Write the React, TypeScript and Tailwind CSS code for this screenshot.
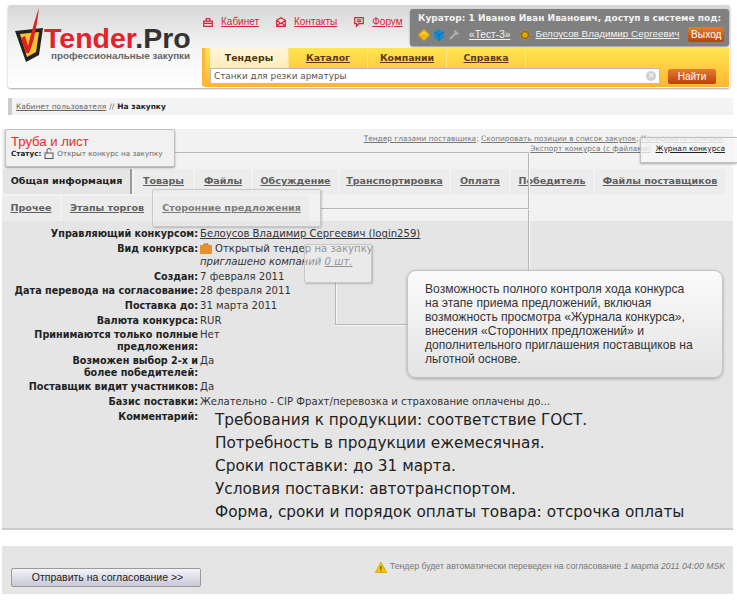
import React from "react";

const verdana = "font-['DejaVu_Sans',sans-serif]";
const arial = "font-['Liberation_Sans',sans-serif]";

const topLinks = [
  { label: "Кабинет", icon: "M2 6h10v6H2z M5 6V3h4v3 M2 8.5h10" },
  { label: "Контакты", icon: "M2 5l5-3 5 3v7H2z M2 5l5 4 5-4 M2 12l4-4 M12 12L8 8" },
  { label: "Форум", icon: "M2 2h10v7H7l-3 3V9H2z M4.5 4.5h5 M4.5 6.5h5" },
];

const mainTabs = ["Тендеры", "Каталог", "Компании", "Справка"];

const tabsRowOne = [
  { label: "Общая информация", width: "w-[129px]", active: true },
  { label: "Товары", width: "w-[59px]" },
  { label: "Файлы", width: "w-[56px]" },
  { label: "Обсуждение", width: "w-[85px]" },
  { label: "Транспортировка", width: "w-[109px]" },
  { label: "Оплата", width: "w-[58px]" },
  { label: "Победитель", width: "w-[82px]" },
  { label: "Файлы поставщиков", width: "w-[130px]" },
];

const tabsRowTwo = [
  { label: "Прочее", width: "w-[58px]" },
  { label: "Этапы торгов", width: "w-[90px]" },
  { label: "Сторонние предложения", width: "w-[155px]" },
];

const simpleRows = [
  { label: "Создан:", value: "7 февраля 2011" },
  { label: "Дата перевода на согласование:", value: "28 февраля 2011" },
  { label: "Поставка до:", value: "31 марта 2011" },
  { label: "Валюта конкурса:", value: "RUR" },
  { label: "Принимаются только полные\nпредложения:", value: "Нет" },
  { label: "Возможен выбор 2-х и\nболее победителей:", value: "Да" },
  { label: "Поставщик видит участников:", value: "Да" },
  { label: "Базис поставки:", value: "Желательно - CIP Фрахт/перевозка и страхование оплачены до..." },
];

const comments = [
  "Требования к продукции: соответствие ГОСТ.",
  "Потребность в продукции ежемесячная.",
  "Сроки поставки: до 31 марта.",
  "Условия поставки: автотранспортом.",
  "Форма, сроки и порядок оплаты товара: отсрочка оплаты",
];

function Logo() {
  return (
    <div className="relative w-[190px] h-[70px] shrink-0">
      <svg className="absolute left-[6px] top-[2px]" width="42" height="60" viewBox="0 0 42 60">
        <path d="M1 24l28-3-4 27-13 7z" fill="#222" />
        <path d="M6 27l19-2-3 20-9 5z" fill="#fbc531" />
        <path d="M7 31l4-2 3 10C17 27 21 12 25 1c-2 17-5 34-10 45h-3z" fill="#e02020" />
      </svg>
      <span className={`absolute left-[36px] top-[20px] text-[28.5px] leading-[26px] font-bold text-[#e3222a] whitespace-nowrap ${arial}`}>
        Tender<span className="text-[#333]">.Pro</span>
      </span>
      <span className={`absolute left-[43px] top-[46px] text-[9.9px] leading-[10px] font-bold text-[#666] whitespace-nowrap ${arial}`}>
        профессиональные закупки
      </span>
    </div>
  );
}

function Header() {
  return (
    <div className="mx-[8px] mt-[5px] w-[722px] h-[83px] rounded-[3px] flex bg-gradient-to-b from-[#d6d6d6] via-[#f4f4f4] to-white shadow-[0_1px_2px_rgba(0,0,0,0.35)]">
      <Logo />
      <div className="flex flex-col ml-[4px] w-[527px] pt-[4px]">
        <div className="flex h-[39px]">
          <div className="flex items-start pt-[7px] w-[208px]">
            {topLinks.map((l) => (
              <a key={l.label} className={`flex items-center ${l.label === "Форум" ? "" : "mr-[16px]"} text-[10px] leading-[12px] text-[#d8213b] underline ${arial}`}>
                <svg className="mr-[7px]" width="12" height="12" viewBox="0 0 14 14" fill="none" stroke="#d8213b" strokeWidth="1.4">
                  <path d={l.icon} />
                </svg>
                {l.label}
              </a>
            ))}
          </div>
          <div className="w-[319px] h-[37px] rounded-[3px] bg-[#808080] pl-[8px] pt-[2px] shadow-[0_1px_2px_rgba(0,0,0,0.4)] text-[#f2f2f2]">
            <div className={`text-[9.05px] leading-[15px] font-bold whitespace-nowrap ${verdana}`}>
              Куратор: 1 Иванов Иван Иванович, доступ в системе под:
            </div>
            <div className={`flex items-center h-[17px] text-[10.2px] whitespace-nowrap ${arial}`}>
              <svg className="mr-[3px]" width="12" height="12" viewBox="0 0 12 12"><path d="M6 0l6 6-6 6-6-6z" fill="#f0b400" /><path d="M3 6l3-3 3 3" fill="none" stroke="#ffe07a" /></svg>
              <svg className="mr-[4px]" width="12" height="12" viewBox="0 0 12 12"><path d="M6 0l5 3v6l-5 3-5-3V3z" fill="#1a8bd0" /><path d="M1 3l5 3 5-3M6 6v6" fill="none" stroke="#0b5f96" strokeWidth="0.7" /></svg>
              <svg className="mr-[9px]" width="11" height="11" viewBox="0 0 12 12"><path d="M1 11L8 4M6 2l4 4" stroke="#b0b0b0" strokeWidth="2.2" /></svg>
              <a className="underline mr-[9px]">«Тест-3»</a>
              <svg className="mr-[4px]" width="12" height="12" viewBox="0 0 12 12"><circle cx="6" cy="6" r="3.4" fill="#e6a800" stroke="#7a5a00" /><path d="M6 0v2M6 10v2M0 6h2M10 6h2M2 2l1.4 1.4M8.6 8.6L10 10M10 2L8.6 3.4M2 10l1.4-1.4" stroke="#c69000" /></svg>
              <a className="underline text-[9.85px]">Белоусов Владимир Сергеевич</a>
              <span className="ml-[9px] w-[36px] h-[15px] rounded-[2px] bg-gradient-to-b from-[#e87a30] to-[#b8400c] flex items-center justify-center text-white">Выход</span>
            </div>
          </div>
        </div>
        <div className="h-[39px] bg-gradient-to-b from-[#ffe650] to-[#ffb52f] rounded-bl-[3px] pl-[5px] border-l-[3px] border-[#ffb73a]">
          <div className="flex h-[20px]">
            {mainTabs.map((t, i) => (
              <div
                key={t}
                className={`flex items-center justify-center w-[79px] text-[9.4px] font-bold border-r border-[#fde68a] ${verdana} ${i === 0 ? "bg-gradient-to-b from-[#fff7dc] to-[#ffedb8] text-[#4a3410]" : "text-[#5c3b05] underline"}`}
              >
                {t}
              </div>
            ))}
          </div>
          <div className="flex items-center">
            <div className={`relative w-[450px] h-[16px] bg-white border border-[#bbb] pl-[3px] text-[8.9px] leading-[14px] text-[#555] ${verdana}`}>
              Станки для резки арматуры
              <span className="absolute right-[3px] top-[2px] w-[10px] h-[10px] rounded-full bg-[#cfcfcf] text-white text-[8px] leading-[10px] text-center">×</span>
            </div>
            <span className={`ml-[8px] w-[48px] h-[15px] rounded-[2px] bg-gradient-to-b from-[#e87a30] to-[#b8400c] text-white text-[10px] leading-[15px] text-center ${arial}`}>Найти</span>
          </div>
        </div>
      </div>
    </div>
  );
}

function Breadcrumb() {
  return (
    <div className={`ml-[8px] mr-[4px] mt-[10px] h-[17px] border-l-[4px] border-[#cccccc] bg-[#f3f3f3] pl-[4px] pt-[1px] flex items-center text-[7.5px] text-[#666] ${verdana}`}>
      <a className="underline">Кабинет пользователя</a>
      <span className="mx-[3px]">//</span>
      <b className="text-[#222]">На закупку</b>
    </div>
  );
}

function TabCell({ label, width, active }: { label: string; width: string; active?: boolean }) {
  return (
    <div
      className={`${width} h-[25px] mr-[2px] flex items-center justify-center text-[9.55px] font-bold whitespace-nowrap ${verdana} ${
        active ? "bg-[#e5e5e5] text-[#222] border-r-2 border-[#999]" : "bg-[#ececec] text-[#5f5f5f] underline"
      }`}
    >
      {label}
    </div>
  );
}

function InfoRow({ label, children }: { label: string; children: React.ReactNode }) {
  return (
    <div className="flex">
      <div className="w-[196px] shrink-0 text-right font-bold text-[9.65px] text-[#222] whitespace-pre-line">{label}</div>
      <div className="pl-[2px] text-[#333] whitespace-nowrap">{children}</div>
    </div>
  );
}

function Panel() {
  return (
    <div className="ml-[2px] mt-[14px] w-[731px] h-[401px] flex flex-col">
      <div className="bg-[#f2f2f2]">
        <div className={`h-[15px] pt-[5px] pr-[8px] text-right text-[7.42px] leading-[10px] text-[#777] ${verdana}`}>
          <a className="underline">Тендер глазами поставщика</a>; <a className="underline">Скопировать позиции в список закупок</a>; <a className="underline">Копировать позиции</a>;
        </div>
        <div className={`h-[25px] pr-[8px] text-right text-[7.42px] leading-[10px] text-[#777] ${verdana}`}>
          <a className="underline">Экспорт конкурса (с файлами)</a>; <a className="relative z-10 underline text-[#222]">Журнал конкурса</a>
        </div>
        <div className="flex mb-[2px] ml-[1px]">
          {tabsRowOne.map((t) => (
            <TabCell key={t.label} label={t.label} width={t.width} active={t.active} />
          ))}
        </div>
        <div className="flex">
          {tabsRowTwo.map((t) => (
            <TabCell key={t.label} label={t.label} width={t.width} />
          ))}
        </div>
      </div>
      <div className={`flex-1 bg-[#e5e5e5] border-b-2 border-[#cccccc] pt-[7px] text-[10.1px] leading-[11.3px] flex flex-col gap-[3.4px] ${verdana}`}>
        <InfoRow label="Управляющий конкурсом:">
          <a className="underline">Белоусов Владимир Сергеевич (login259)</a>
        </InfoRow>
        <InfoRow label="Вид конкурса:">
          <div className="flex items-center">
            <svg className="mr-[3px]" width="12" height="11" viewBox="0 0 12 11">
              <path d="M4 2V1h4v1" fill="none" stroke="#a05a10" />
              <rect y="2" width="12" height="9" rx="1" fill="#e8912a" />
            </svg>
            Открытый тендер на закупку
          </div>
          <div className="italic mt-[2px]">
            приглашено компаний <a className="underline">0 шт.</a>
          </div>
        </InfoRow>
        {simpleRows.map((r) => (
          <InfoRow key={r.label} label={r.label}>
            {r.value}
          </InfoRow>
        ))}
        <div className="flex">
          <div className="w-[196px] shrink-0 text-right font-bold text-[9.65px] text-[#222]">Комментарий:</div>
          <div className="-mt-[2px] pl-[17px] text-[15.3px] leading-[23px] text-[#222] whitespace-nowrap">
            {comments.map((c) => (
              <div key={c}>{c}</div>
            ))}
          </div>
        </div>
      </div>
    </div>
  );
}

function Footer() {
  return (
    <div className="ml-[2px] mt-[16px] w-[731px] h-[48px] bg-[#e5e5e5] flex justify-between relative">
      <button className={`ml-[9px] mt-[22px] w-[190px] h-[19px] pl-[3px] rounded-[2px] border border-[#999] bg-gradient-to-b from-[#f4f4f8] to-[#c8c8d8] text-[10.5px] text-[#222] ${arial}`}>
        Отправить на согласование &gt;&gt;
      </button>
      <div className={`mt-[15px] mr-[8px] h-[12px] flex items-center text-[8.7px] text-[#777] whitespace-nowrap ${arial}`}>
        <svg className="mr-[3px]" width="12" height="11" viewBox="0 0 12 11">
          <path d="M6 0l6 11H0z" fill="#f5c400" stroke="#b08a00" strokeWidth="0.5" />
          <path d="M6 4v3.5M6 8.5v1" stroke="#333" />
        </svg>
        Тендер будет автоматически переведен на согласование&nbsp;<i>1 марта 2011 04:00 MSK</i>
      </div>
    </div>
  );
}

function Overlays() {
  const popup = "absolute border border-[#c8c8c8] rounded-[2px] shadow-[1px_1px_2px_rgba(0,0,0,0.2)]";
  const line = "absolute bg-[#f6f6f6] border-[#b5b5b5]";
  return (
    <>
      <div className={`${line} left-[174px] top-[152px] w-[355px] h-[2px] border-t`} />
      <div className={`${line} left-[528px] top-[152px] w-[2px] h-[118px] border-l`} />
      <div className={`${line} left-[320px] top-[208px] w-[209px] h-[2px] border-t`} />
      <div className={`${line} left-[335px] top-[283px] w-[2px] h-[42px] border-l`} />
      <div className={`${line} left-[335px] top-[324px] w-[72px] h-[2px] border-t`} />
      <div className="absolute left-[5px] top-[129px] w-[170px] h-[38px] bg-[#f1f1f1] border border-[#c0c0c0] rounded-[2px] shadow-[0_1px_2px_rgba(0,0,0,0.35)] pl-[5px] pt-[5px]">
        <div className={`text-[13.1px] leading-[13px] text-[#e62b2b] ${arial}`}>Труба и лист</div>
        <div className={`flex items-center text-[7.2px] leading-[11px] whitespace-nowrap text-[#666] ${verdana}`}>
          <b className="text-[#222] mr-[3px]">Статус:</b>
          <svg className="mr-[3px]" width="10" height="11" viewBox="0 0 10 11" fill="none" stroke="#555">
            <rect x="1" y="5" width="8" height="5.5" />
            <path d="M3 5V2.5a2 2 0 0 1 4 0" />
          </svg>
          Открыт конкурс на закупку
        </div>
      </div>
      <div className={`${popup} left-[152px] top-[189px] w-[169px] h-[38px] bg-[#f2f2f2]/20`} />
      <div className="absolute left-[640px] top-[137px] w-[97px] h-[26px] border-t border-l border-b border-[#c0c0c0] bg-[#f6f6f6]/75 shadow-[0_1px_2px_rgba(0,0,0,0.3)]" />
      <div className={`${popup} left-[304px] top-[244px] w-[68px] h-[39px] bg-[#efefef]/50`} />
      <div className={`absolute left-[407px] top-[270px] w-[316px] h-[108px] rounded-[9px] border border-[#c4c4c4] bg-gradient-to-b from-[#fbfbfb] to-[#e4e4e4] shadow-[0_1px_3px_rgba(0,0,0,0.3)] pl-[17px] pr-[25px] pt-[11px] text-[12.1px] leading-[14px] text-[#333] ${arial}`}>
        Возможность полного контроля хода конкурса на этапе приема предложений, включая возможность просмотра «Журнала конкурса», внесения «Сторонних предложений» и дополнительного приглашения поставщиков на льготной основе.
      </div>
    </>
  );
}

export default function App() {
  return (
    <div className={`relative w-[737px] h-[600px] overflow-hidden bg-white ${verdana}`}>
      <Header />
      <Breadcrumb />
      <Panel />
      <Footer />
      <Overlays />
    </div>
  );
}
